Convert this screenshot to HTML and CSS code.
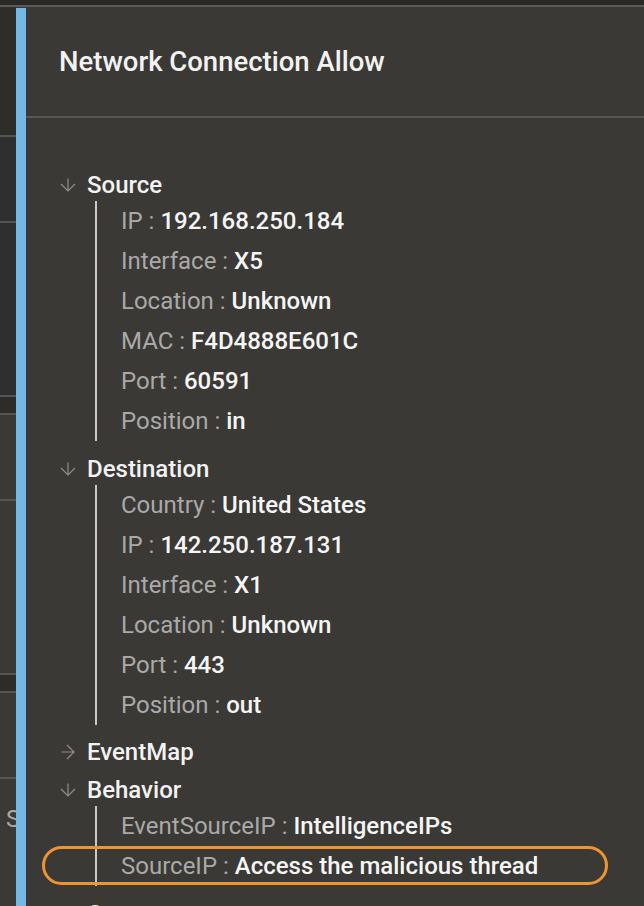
FILE: index.html
```html
<!DOCTYPE html>
<html>
<head>
<meta charset="utf-8">
<link rel="stylesheet" href="styles.css">
</head>
<body>
<div class="topstrip"></div>
<div class="main">
  <div class="leftcol">
    <div class="seg s1"></div>
    <div class="seg s2"></div>
    <div class="seg s3"></div>
    <div class="seg s4"></div>
    <div class="seg s5"></div>
    <div class="seg s6"></div>
    <div class="seg s7"></div>
    <div class="seg s8"></div>
    <div class="seg s9"><span class="clip">S</span></div>
  </div>
  <div class="bluebar"></div>
  <div class="panel">
    <div class="header"><h1 class="title">Network Connection Allow</h1></div>
    <div class="content">
      <div class="node">
        <div class="head"><svg class="arrow" viewBox="0 0 16 16"><path d="M8 1.5v12.5M1 7l7 7 7-7"/></svg><span>Source</span></div>
        <div class="children">
          <div class="row"><span class="k">IP : </span><span class="v">192.168.250.184</span></div>
          <div class="row"><span class="k">Interface : </span><span class="v">X5</span></div>
          <div class="row"><span class="k">Location : </span><span class="v">Unknown</span></div>
          <div class="row"><span class="k">MAC : </span><span class="v">F4D4888E601C</span></div>
          <div class="row"><span class="k">Port : </span><span class="v">60591</span></div>
          <div class="row"><span class="k">Position : </span><span class="v">in</span></div>
        </div>
      </div>
      <div class="node">
        <div class="head"><svg class="arrow" viewBox="0 0 16 16"><path d="M8 1.5v12.5M1 7l7 7 7-7"/></svg><span>Destination</span></div>
        <div class="children">
          <div class="row"><span class="k">Country : </span><span class="v">United States</span></div>
          <div class="row"><span class="k">IP : </span><span class="v">142.250.187.131</span></div>
          <div class="row"><span class="k">Interface : </span><span class="v">X1</span></div>
          <div class="row"><span class="k">Location : </span><span class="v">Unknown</span></div>
          <div class="row"><span class="k">Port : </span><span class="v">443</span></div>
          <div class="row"><span class="k">Position : </span><span class="v">out</span></div>
        </div>
      </div>
      <div class="node">
        <div class="head"><svg class="arrow" viewBox="0 0 16 16"><path d="M1.5 8h12.5M7 1l7 7-7 7"/></svg><span>EventMap</span></div>
      </div>
      <div class="node">
        <div class="head"><svg class="arrow" viewBox="0 0 16 16"><path d="M8 1.5v12.5M1 7l7 7 7-7"/></svg><span>Behavior</span></div>
        <div class="children">
          <div class="row"><span class="k">EventSourceIP : </span><span class="v">IntelligenceIPs</span></div>
          <div class="row hl"><span class="k">SourceIP : </span><span class="v">Access the malicious thread</span></div>
        </div>
      </div>
      <div class="node">
        <div class="head"><svg class="arrow" viewBox="0 0 16 16"><path d="M8 1.5v12.5M1 7l7 7 7-7"/></svg><span>Context</span></div>
      </div>
    </div>
  </div>
</div>
</body>
</html>
```
FILE: styles.css
```css
html, body {
  margin: 0;
  padding: 0;
}
body {
  width: 644px;
  height: 906px;
  overflow: hidden;
  background: #3a3935;
  font-family: Roboto, "Noto Sans", sans-serif;
}
.topstrip {
  height: 5px;
  background: #2a2926;
  border-bottom: 2px solid #5a5a5a;
}
.main {
  display: flex;
  height: 899px;
}
.leftcol {
  width: 16px;
  flex: none;
  display: flex;
  flex-direction: column;
  overflow: hidden;
}
.seg {
  flex: none;
  border-bottom: 2px solid #555555;
}
.s1 { height: 128px; background: #2e2d2a; }
.s2 { height: 84px; background: #2f2f2f; }
.s3 { height: 172px; background: #2f2f2f; }
.s4 { height: 16px; background: #2d2c29; }
.s5 { height: 84px; background: #3a3935; }
.s6 { height: 172px; background: #3a3935; }
.s7 { height: 16px; background: #2d2c29; }
.s8 { height: 84px; background: #3a3935; }
.s9 { flex: 1; background: #3a3935; border-bottom: none; position: relative; }
.clip {
  position: absolute;
  left: 6px;
  top: 26px;
  font-size: 24px;
  color: #a8a8a8;
}
.bluebar {
  width: 10px;
  flex: none;
  margin-top: 1px;
  background: #73b9e5;
}
.panel {
  flex: 1;
  min-width: 0;
}
.header {
  height: 109px;
  border-bottom: 2px solid #575757;
  display: flex;
  align-items: center;
  padding-left: 33px;
}
.title {
  margin: 0;
  font-size: 27.5px;
  font-weight: 500;
  color: #f2f2f2;
}
.content {
  padding: 51px 0 0 34px;
}
.node {
  display: flex;
  flex-direction: column;
  margin-bottom: 6px;
}
.head {
  height: 32px;
  display: flex;
  align-items: center;
  gap: 11px;
  font-size: 24px;
  font-weight: 500;
  color: #f2f2f2;
}
.arrow {
  width: 16px;
  height: 16px;
  flex: none;
  fill: none;
  stroke: #8e8e8e;
  stroke-width: 1.2;
}
.children {
  margin-left: 35px;
  border-left: 2px solid #c9c9c9;
  padding-left: 24px;
  margin-bottom: 5.5px;
}
.row {
  height: 40px;
  display: flex;
  align-items: center;
  font-size: 24px;
  white-space: pre;
}
.k {
  color: #a9a9a9;
}
.v {
  color: #f5f5f5;
  font-weight: 500;
}
.hl {
  position: relative;
}
.hl::after {
  content: "";
  position: absolute;
  left: -79px;
  top: 0;
  width: 566px;
  height: 39px;
  box-sizing: border-box;
  border: 3px solid #f09433;
  border-radius: 20px;
}
```
